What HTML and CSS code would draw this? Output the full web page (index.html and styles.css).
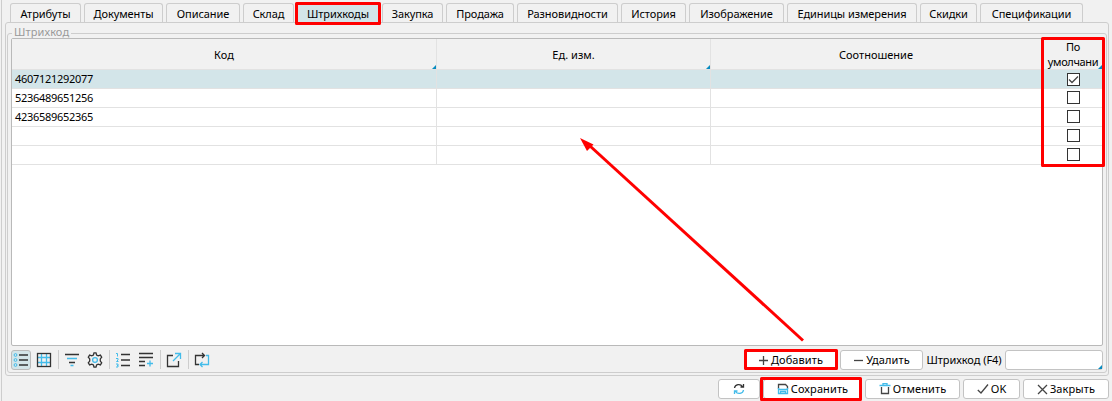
FILE: index.html
```html
<!DOCTYPE html>
<html lang="ru">
<head>
<meta charset="utf-8">
<title>Штрихкоды</title>
<link rel="stylesheet" href="styles.css">
</head>
<body>
<div class="window">
  <nav class="tabs">
    <div class="tab w71"><span>Атрибуты</span></div>
    <div class="tab w79"><span>Документы</span></div>
    <div class="tab w74"><span>Описание</span></div>
    <div class="tab w51"><span>Склад</span></div>
    <div class="tab active w82"><span>Штрихкоды</span></div>
    <div class="tab w61"><span>Закупка</span></div>
    <div class="tab w68"><span>Продажа</span></div>
    <div class="tab w101"><span>Разновидности</span></div>
    <div class="tab w65"><span>История</span></div>
    <div class="tab w95"><span>Изображение</span></div>
    <div class="tab w130"><span>Единицы измерения</span></div>
    <div class="tab w57"><span>Скидки</span></div>
    <div class="tab w103"><span>Спецификации</span></div>
  </nav>
  <main class="panel">
    <section class="group">
      <div class="legend"><span>Штрихкод</span></div>
      <div class="grid">
        <div class="row head"><div class="cell"><span>Код</span><i></i></div><div class="cell"><span>Ед. изм.</span><i></i></div><div class="cell"><span>Соотношение</span></div><div class="cell two"><span>По<br>умолчани</span><i></i></div></div>
        <div class="row sel"><div class="cell code">4607121292077</div><div class="cell"></div><div class="cell"></div><div class="cell mark"><b class="check"><svg width="11" height="11" viewBox="0 0 11 11"><path d="M1 5.500L4 8.500L10 2.500"/></svg></b></div></div>
        <div class="row"><div class="cell code">5236489651256</div><div class="cell"></div><div class="cell"></div><div class="cell mark"><b class="check"></b></div></div>
        <div class="row"><div class="cell code">4236589652365</div><div class="cell"></div><div class="cell"></div><div class="cell mark"><b class="check"></b></div></div>
        <div class="row"><div class="cell"></div><div class="cell"></div><div class="cell"></div><div class="cell mark"><b class="check"></b></div></div>
        <div class="row"><div class="cell"></div><div class="cell"></div><div class="cell"></div><div class="cell mark"><b class="check"></b></div></div>
      </div>
      <div class="toolbar">
        <div class="tool on"><svg width="16" height="16" viewBox="0 0 16 16"><path class="d" d="M6 3H15M6 8H15M6 13H15"/><g class="b thin"><circle cx="2.5" cy="3" r="1.4"/><circle cx="2.5" cy="8" r="1.4"/><circle cx="2.5" cy="13" r="1.4"/></g></svg></div>
        <div class="tool g3"><svg width="16" height="16" viewBox="0 0 16 16"><path class="b" d="M5.500 1V15M10.500 1V15M1 5.500H15M1 10.500H15"/><rect class="d" x="1.500" y="1.500" width="13" height="13"/></svg></div>
        <hr>
        <div class="tool"><svg width="16" height="16" viewBox="0 0 16 16"><path class="d" d="M1 2.500H15M5 10.500H11"/><path class="b" d="M3 6.500H13M6.500 13.500H9.500"/></svg></div>
        <div class="tool g3"><svg width="16" height="16" viewBox="0 0 16 16"><path class="d" d="M6.400 3L7 .8H9L9.600 3L11.200 3.900L13.400 3.100L14.700 5.200L13.300 6.900V9.100L14.700 10.800L13.400 12.900L11.200 12.100L9.600 13L9 15.200H7L6.400 13L4.800 12.100L2.600 12.900L1.300 10.800L2.700 9.100V6.900L1.300 5.200L2.600 3.100L4.800 3.900Z"/><circle class="b" cx="8" cy="8" r="2.400"/></svg></div>
        <hr>
        <div class="tool"><svg width="16" height="16" viewBox="0 0 16 16"><path class="d" d="M6 2.500H15M6 8H15M6 13.500H15"/><path class="b thin" d="M1 1.500H2.500V4.500M1 6.500H3V8L1.500 9.500H3.500M1 12H3V15H1M2 13.500H3"/></svg></div>
        <div class="tool g3"><svg width="16" height="16" viewBox="0 0 16 16"><path class="d" d="M1 1.500H15M1 5.500H15M1 9.500H7M1 13.500H7"/><path class="b" d="M9 11.500H15M12 8.500V14.500"/></svg></div>
        <hr>
        <div class="tool"><svg width="16" height="16" viewBox="0 0 16 16"><path class="d" d="M7 3.500H1.500V14.500H12.500V9"/><path class="b" d="M7 9L14.500 1.500M9 1.500H14.500V7"/></svg></div>
        <hr>
        <div class="tool"><svg width="16" height="16" viewBox="0 0 16 16"><path class="d" d="M5 12.500H1.500V3.500H10M8 1L10.500 3.500L8 6"/><path class="b" d="M12 3.500H14.500V12.500H6M8.500 10L6 12.500L8.500 15"/></svg></div>
        <div class="space"></div>
        <button class="btn add"><svg width="11" height="11" viewBox="0 0 11 11"><path class="g" d="M1 5.500H10M5.500 1V10"/></svg><span>Добавить</span></button>
        <button class="btn del"><svg width="11" height="11" viewBox="0 0 11 11"><path class="g" d="M1 5.500H10"/></svg><span>Удалить</span></button>
        <label class="lbl"><span>Штрихкод (F4)</span></label>
        <div class="field"><i></i></div>
      </div>
    </section>
  </main>
  <footer class="actions">
    <button class="btn rf"><svg width="12" height="12" viewBox="0 0 12 12"><path class="d" d="M1.500 5C2 1 7.500 .5 9.500 3.500M10.500 1V4H7.500"/><path class="b" d="M10.500 7C10 11 4.500 11.500 2.500 8.500M1.500 11V8H4.500"/></svg></button>
    <button class="btn save"><svg width="12" height="12" viewBox="0 0 12 12"><path class="g" d="M1.500 6V1.500H8.500L10.500 3.500V6"/><path class="b" d="M1.500 5V10.500H10.500V5M1.500 6.500H10.500M3.500 10V8.500H8.500V10"/></svg><span>Сохранить</span></button>
    <button class="btn cancel"><svg width="12" height="12" viewBox="0 0 12 12"><path class="g" d="M2.500 4V10.500H9.500V4"/><path class="b" d="M.5 2.500H11.500M4 2V.5H8V2"/></svg><span>Отменить</span></button>
    <button class="btn ok"><svg width="12" height="12" viewBox="0 0 12 12"><path class="g" d="M.8 7L4 10L11 1.500"/></svg><span>OK</span></button>
    <button class="btn close"><svg width="11" height="11" viewBox="0 0 11 11"><path class="g" d="M1 1L10 10M10 1L1 10"/></svg><span>Закрыть</span></button>
  </footer>
  <svg class="marks" width="1112" height="401" viewBox="0 0 1112 401">
    <g fill="none" stroke="#f00" stroke-width="3" stroke-linejoin="round">
      <rect x="296.500" y="3.500" width="83" height="20"/>
      <rect x="1042.500" y="38.500" width="61" height="127"/>
      <rect x="745.500" y="350.500" width="91" height="18"/>
      <rect x="761.500" y="378.500" width="99" height="21"/>
      <path d="M803 340.500L590 146"/>
    </g>
    <path fill="#f00" d="M580 138L593.500 144.500L587 151Z"/>
  </svg>
</div>
</body>
</html>
```
FILE: styles.css
```css
* { box-sizing: border-box; }
body { margin: 0; background: #f1f1f1; font: 11px/16px "Noto Sans", "Open Sans", sans-serif; color: #000; }
.window { position: relative; width: 1112px; height: 401px; overflow: hidden; border-left: 1px solid #f1f1f1; box-shadow: inset 1px 0 #cdcdcd; padding: 3px 3px 0 4px; }
.tabs { display: flex; gap: 3px; padding-left: 5px; height: 19px; }
.tab { flex: none; height: 19px; border: 1px solid #cdcdcd; border-bottom: 0; border-radius: 3px 3px 0 0; display: flex; justify-content: center; line-height: 20px; white-space: nowrap; letter-spacing: -.08px; }
.tab.active { background: #d3e5e9; }
.w71 { width: 71px; } .w79 { width: 79px; } .w74 { width: 74px; } .w51 { width: 51px; } .w82 { width: 82px; }
.w61 { width: 61px; } .w68 { width: 68px; } .w101 { width: 101px; } .w65 { width: 65px; } .w95 { width: 95px; }
.w130 { width: 130px; } .w57 { width: 57px; } .w103 { width: 103px; }
.panel { height: 354px; border: 1px solid #cdcdcd; border-radius: 3px; padding: 2px 1px 2px; }
.group { display: flow-root; position: relative; height: 348px; }
.group::before { content: ""; position: absolute; inset: 8px 0 0; border: 1px solid #cdcdcd; border-radius: 3px; }
.legend { position: relative; height: 13px; line-height: 13px; padding-left: 5px; color: #999; }
.legend span { background: #f1f1f1; padding: 0 2px; display: inline-block; letter-spacing: .1px; }
.grid { position: relative; margin: 0 4px; height: 308px; border: 1px solid #b9b9b9; border-radius: 2px; background: #fff; }
.row { display: grid; grid-template-columns: 425px 274px 331px 1fr; height: 19px; }
.cell { position: relative; border-right: 1px solid #e2e2e2; border-bottom: 1px solid #e2e2e2; display: flex; align-items: center; justify-content: center; }
.head { height: 31px; background: #f1f1f1; text-align: center; line-height: 15px; }
.head .cell:last-child, .row .cell:last-child { border-right: 0; }
.head .two { letter-spacing: -.35px; padding-left: 2px; }
.cell.code { justify-content: flex-start; padding-left: 3px; letter-spacing: -.3px; }
.cell.mark { align-items: flex-start; padding: 2px 0 0 3px; }
.sel { background: #d3e5e9; }
.sel .mark { padding-top: 3px; }
i { position: absolute; right: 0; bottom: 0; border-left: 4px solid transparent; border-bottom: 4px solid #078bc0; }
.check { width: 13px; height: 13px; border: 1px solid #333; background: #fff; display: flex; }
.check path { fill: none; stroke: #444; stroke-width: 1.3; }
.toolbar { position: relative; display: flex; margin: 4px 4px 0; height: 20px; }
.tool { width: 20px; height: 20px; display: flex; align-items: center; justify-content: center; }
.tool.on { background: #d3e5e9; border: 1px solid #bbb; border-radius: 3px; }
.tool.g3 { margin-left: 3px; }
hr { width: 1px; height: 19px; margin: 0 3px 0 4px; border: 0; background: #cdcdcd; }
.d, .b, .g { fill: none; stroke: #333; stroke-width: 1.3; }
.b { stroke: #43bcea; } .g { stroke: #444; } .thin { stroke-width: 1; }
.space { flex: 1; }
.btn { flex: none; height: 20px; margin: 0; padding: 0; border: 1px solid #c3c3c3; border-radius: 3px; background: #fff; font: inherit; color: #000; display: flex; align-items: center; justify-content: center; gap: 2px; white-space: nowrap; letter-spacing: .1px; }
.add { width: 93px; margin-right: 3px; } .del { width: 83px; }
.lbl { width: 82px; display: flex; justify-content: center; line-height: 19px; white-space: nowrap; letter-spacing: -.05px; }
.field { position: relative; width: 98px; border: 1px solid #c3c3c3; border-radius: 3px; background: #fff; }
.actions { display: flex; justify-content: flex-end; gap: 3px; padding-top: 3px; }
.rf { width: 42px; } .save { width: 99px; } .cancel { width: 95px; } .ok { width: 57px; } .close { width: 86px; }
.marks { position: absolute; left: -1px; top: 0; pointer-events: none; }
```
